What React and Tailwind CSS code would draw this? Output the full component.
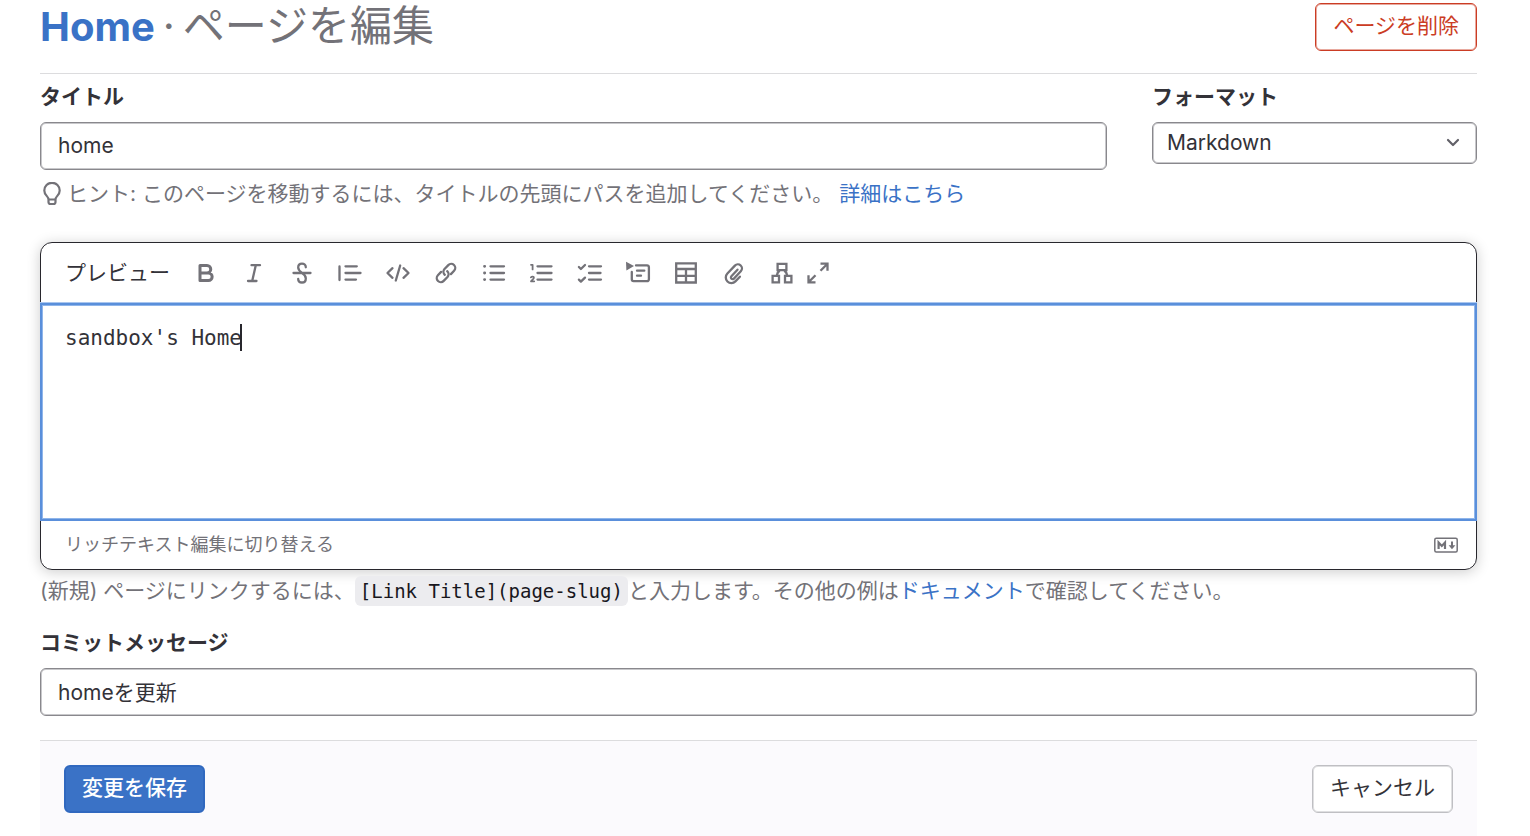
import React from 'react';

const tools = [
  {
    label: '太字',
    art: <path strokeWidth="3" d="M6 4.500h7a3.700 3.700 0 0 1 0 7.500H6zM6 12h8.400a3.700 3.700 0 0 1 0 7.500H6z" />,
  },
  { label: '斜体', art: <path d="M9.500 4.200h8.500M6 20h8.500M13.800 4.200 10.200 20" /> },
  {
    label: '取り消し線',
    art: (
      <path d="M3.500 12h17M15.800 6.300c0-2.200-1.600-3.600-3.800-3.600S8.200 4.200 8.200 6.600c0 2.600 2 4 3.800 5.400 2 1.200 3.800 2.800 3.800 5.400s-1.600 4.100-3.800 4.100-3.800-1.500-3.800-3.600" />
    ),
  },
  { label: '引用', art: <path d="M1.500 5.500v13.500M7.500 5.300h11.300M7.500 12h15M7.500 18.600h10.500" /> },
  { label: 'コード', art: <path d="M6.500 7.200 1.500 12l5 4.800M17.500 7.200l5 4.800-5 4.800M14.200 4.500 9.800 19.500" /> },
  {
    label: 'リンク',
    art: (
      <path d="M10.800 13.800a4.200 4.200 0 0 1-.3-5.800l3.800-3.900a4 4 0 0 1 5.800 5.600l-3.200 3.400M13.200 10.200a4.200 4.200 0 0 1 .3 5.800l-3.800 3.900a4 4 0 0 1-5.800-5.600l3.200-3.400" />
    ),
  },
  {
    label: '箇条書き',
    art: (
      <>
        <path strokeWidth="2.800" d="M2.500 5.300h.2M2.500 12h.2M2.500 18.600h.2" />
        <path d="M8.500 5.300H22M8.500 12H22M8.500 18.600H22" />
      </>
    ),
  },
  {
    label: '番号付きリスト',
    art: (
      <>
        <path d="M7.500 5.300h14M7.500 12h14M7.500 18.600h14" />
        <path strokeWidth="1.800" d="M1 3.800h1.600v4.600M.900 16.300c1-.9 3-.8 3 .5 0 1.200-1.600 2-2.900 3.500h3.200" />
      </>
    ),
  },
  {
    label: 'タスクリスト',
    art: <path d="M11 5.300h12M11 12h11.500M11 18.600h12M.900 6l2 2L7 4M.900 18.600l2 2L7 16.600" />,
  },
  {
    label: '折りたたみセクション',
    art: (
      <>
        <path fill="currentColor" stroke="none" d="M0 .8 8 5 .4 9.400z" />
        <path d="M5.800 11v7.300a1.800 1.800 0 0 0 1.800 1.800h13.500a1.800 1.800 0 0 0 1.800-1.800V6.200a1.800 1.800 0 0 0-1.800-1.800H10M11 9.700h7.300M11 14.700h4" />
      </>
    ),
  },
  { label: '表', art: <path strokeLinejoin="miter" d="M2.200 2.300h19.600v19.200H2.200zM2.200 8h19.600M2.200 14.800h19.600M12 8v13.500" /> },
  {
    label: 'ファイルを添付',
    art: (
      <path d="M15.300 8.300 9.200 14.800a1.700 1.700 0 0 0 2.500 2.400l6.900-7.300a4.100 4.100 0 0 0-5.900-5.700l-7.500 7.900a5.600 5.600 0 0 0 8 7.900l4.500-4.700" transform="translate(.2 .4)" />
    ),
  },
  {
    label: '図',
    art: (
      <path strokeLinejoin="miter" strokeLinecap="butt" d="M7.600 2.800h8.800v6.400H7.600zM2.600 14.800h6.400v6.500H2.600zM15 14.800h6.400v6.500H15zM9.600 9.500Q7.200 11.500 6.800 14.500M14.400 9.500Q16.800 11.500 17.200 14.500" />
    ),
  },
];

const fullscreen = (
  <path strokeLinejoin="miter" strokeLinecap="butt" d="M14.500 2.700h7v7M21.500 2.700l-7 7M9.500 21.300h-7v-7M2.500 21.300l7-7" />
);

function ToolButton({ label, children }) {
  return (
    <button type="button" aria-label={label} className="size-6 shrink-0 text-[#737278]">
      <svg
        viewBox="0 0 24 24"
        className="size-6 overflow-visible"
        fill="none"
        stroke="currentColor"
        strokeWidth="2.300"
        strokeLinecap="round"
        strokeLinejoin="round"
        aria-hidden="true"
      >
        {children}
      </svg>
    </button>
  );
}

const label = 'block text-[21px] leading-[30px] font-semibold mb-[10px]';
const field =
  'block w-full rounded-md border border-[#89888d] bg-white shadow-[inset_0_0_0_1px_#c8c8cb] outline-none text-[21px]';

export default function App() {
  return (
    <main
      lang="ja"
      className="flex min-h-screen flex-col bg-white pr-[53px] pl-10 font-['Inter','Noto_Sans_CJK_JP',sans-serif] text-[21px] leading-[30px] text-[#333238]"
    >
      <header className="flex items-center justify-between border-b border-[#dcdcde] pt-[3px] pb-[22px]">
        <h1 className="flex h-12 items-baseline gap-2 text-[42px] leading-[46px] text-[#737278]">
          <a href="#home" className="text-[40px] font-bold text-[#3a72c6]">Home</a>
          <span>·</span>
          <span>ページを編集</span>
        </h1>
        <button
          type="button"
          className="h-12 rounded-md border border-[#cb3c24] px-[17px] pb-[2px] text-[#cb3c24] shadow-[inset_0_0_0_1px_#e8a99e]"
        >
          ページを削除
        </button>
      </header>

      <form className="flex flex-1 flex-col" onSubmit={(e) => e.preventDefault()}>
        <div className="flex gap-[45px] pt-2">
          <div className="flex-1">
            <label htmlFor="title" className={label}>タイトル</label>
            <input id="title" type="text" defaultValue="home" className={`${field} h-12 px-[17px] pb-[2px]`} />
          </div>
          <div className="w-[325px]">
            <label htmlFor="format" className={label}>フォーマット</label>
            <div className="relative">
              <select id="format" className={`${field} h-[42px] appearance-none pr-12 pl-[14px]`}>
                <option>Markdown</option>
              </select>
              <svg
                viewBox="0 0 24 24"
                className="pointer-events-none absolute top-2 right-3 size-6 text-[#626168]"
                fill="none"
                stroke="currentColor"
                strokeWidth="2.200"
                strokeLinecap="round"
                strokeLinejoin="round"
                aria-hidden="true"
              >
                <path d="m7 10 5 5 5-5" />
              </svg>
            </div>
          </div>
        </div>

        <p className="mt-[9px] flex items-center text-[#737278]">
          <svg
            viewBox="0 0 24 24"
            className="mr-[3px] size-6 shrink-0"
            fill="none"
            stroke="currentColor"
            strokeWidth="2.200"
            strokeLinejoin="round"
            aria-hidden="true"
          >
            <path d="M8.500 17.500c0-3.500-4.200-4-4.200-9a7.700 7.700 0 0 1 15.400 0c0 5-4.200 5.500-4.200 9zM8.500 17.500v2.500a2 2 0 0 0 2 2h3a2 2 0 0 0 2-2v-2.500" />
          </svg>
          <span>
            ヒント: このページを移動するには、タイトルの先頭にパスを追加してください。{' '}
            <a href="#help" className="text-[#3a72c6]">詳細はこちら</a>
          </span>
        </p>

        <section className="mt-[33px] rounded-xl border border-[#28272d] shadow-[0_2px_14px_rgba(0,0,0,0.2)]">
          <div className="flex h-[60px] items-center gap-6 px-6">
            <button type="button" className="shrink-0">プレビュー</button>
            {tools.map((tool) => (
              <ToolButton key={tool.label} label={tool.label}>{tool.art}</ToolButton>
            ))}
            <div className="-ml-3 flex">
              <ToolButton label="全画面表示">{fullscreen}</ToolButton>
            </div>
          </div>
          <div className="relative -mx-px font-['DejaVu_Sans_Mono',monospace]">
            <textarea
              aria-label="ページの内容"
              defaultValue="sandbox's Home"
              className="block h-[218px] w-full resize-none border-2 border-[#5a8fdb] bg-white px-[23px] pt-[18px] leading-[30px] caret-transparent shadow-[inset_0_0_0_1px_#8fb5ea,0_-1px_0_#a9c6ef] outline-none"
            />
            <span className="pointer-events-none absolute top-[21px] left-[calc(23px+14ch)] h-[27px] w-[2px] bg-[#28272d]" />
          </div>
          <div className="flex h-12 items-center justify-between pr-[18px] pl-6">
            <button type="button" className="text-[18px] text-[#737278]">リッチテキスト編集に切り替える</button>
            <svg viewBox="0 0 24 16" className="h-4 w-6 text-[#737278]" fill="none" stroke="currentColor" role="img" aria-label="Markdown">
              <rect x=".8" y="1.200" width="22.400" height="13.800" rx="1.500" strokeWidth="1.500" />
              <path strokeWidth="2.200" d="M4.600 12V5.500l3.200 3.400L11 5.500V12" />
              <path strokeWidth="2" d="M18 4.500v5" />
              <path fill="currentColor" stroke="none" d="M14.600 8.200h6.800L18 12.200z" />
            </svg>
          </div>
        </section>

        <p className="mt-[6px] text-[#737278]">
          (新規) ページにリンクするには、
          <code className="rounded-md bg-[#ececef] px-[5px] py-1 font-['DejaVu_Sans_Mono',monospace] text-[19px] text-[#18171d]">
            [Link Title](page-slug)
          </code>
          と入力します。その他の例は
          <a href="#docs" className="text-[#3a72c6]">ドキュメント</a>
          で確認してください。
        </p>

        <div className="mt-[22px]">
          <label htmlFor="message" className={label}>コミットメッセージ</label>
          <input id="message" type="text" defaultValue="homeを更新" className={`${field} h-12 px-[17px] pb-[2px]`} />
        </div>

        <footer className="mt-6 flex flex-1 items-start justify-between border-t border-[#dcdcde] bg-[#fbfafd] px-6 pt-6 pb-5">
          <button type="submit" className="h-12 rounded-md border-2 border-[#3068bf] bg-[#3a72c6] px-4 pb-[2px] font-medium text-white">
            変更を保存
          </button>
          <button
            type="button"
            className="h-12 rounded-md border border-[#bfbfc3] bg-white px-[17px] pb-[2px] shadow-[inset_0_0_0_1px_#dfdfe1]"
          >
            キャンセル
          </button>
        </footer>
      </form>
    </main>
  );
}
